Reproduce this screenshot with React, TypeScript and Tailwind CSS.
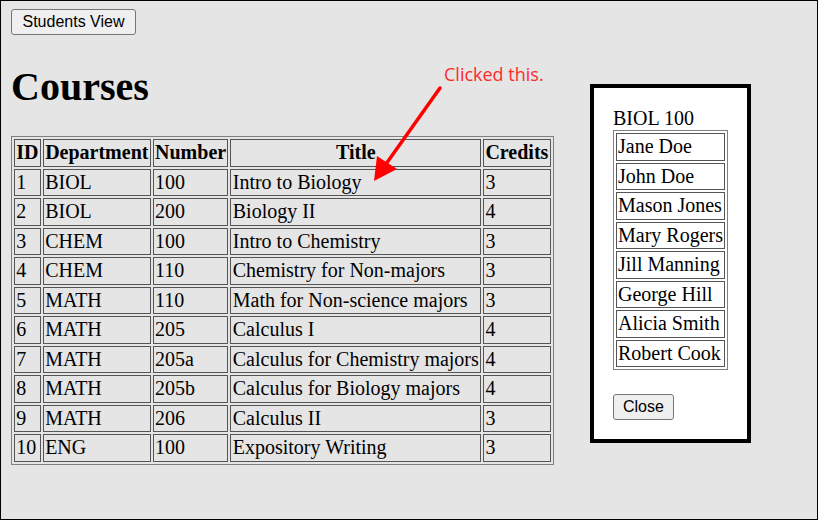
import React from 'react';

const courses = [
  { id: 1, dept: 'BIOL', num: '100', title: 'Intro to Biology', credits: 3 },
  { id: 2, dept: 'BIOL', num: '200', title: 'Biology II', credits: 4 },
  { id: 3, dept: 'CHEM', num: '100', title: 'Intro to Chemistry', credits: 3 },
  { id: 4, dept: 'CHEM', num: '110', title: 'Chemistry for Non-majors', credits: 3 },
  { id: 5, dept: 'MATH', num: '110', title: 'Math for Non-science majors', credits: 3 },
  { id: 6, dept: 'MATH', num: '205', title: 'Calculus I', credits: 4 },
  { id: 7, dept: 'MATH', num: '205a', title: 'Calculus for Chemistry majors', credits: 4 },
  { id: 8, dept: 'MATH', num: '205b', title: 'Calculus for Biology majors', credits: 4 },
  { id: 9, dept: 'MATH', num: '206', title: 'Calculus II', credits: 3 },
  { id: 10, dept: 'ENG', num: '100', title: 'Expository Writing', credits: 3 },
];

const students = [
  'Jane Doe',
  'John Doe',
  'Mason Jones',
  'Mary Rogers',
  'Jill Manning',
  'George Hill',
  'Alicia Smith',
  'Robert Cook',
];

// обычная кнопка в стиле браузера по умолчанию
const btn =
  "h-[26px] bg-[#efefef] border border-[#767676] rounded-[3px] text-[16px] leading-[18px] text-black font-['Liberation_Sans',Arial,sans-serif]";

const cell = 'border border-[#555] py-px px-[1.3px] leading-[23.5px] text-left align-middle';
const studentCell = 'border border-[#555] p-px leading-[23.5px] text-left align-middle';

export default function App() {
  return (
    <div className="relative w-[818px] h-[520px] overflow-hidden border border-black bg-[#e5e5e5] pt-[8px] pl-[10px] font-['Liberation_Serif','Times_New_Roman',serif] text-black">
      <button className={btn + ' px-[10.5px]'}>Students View</button>

      <h1 className="mt-[30px] text-[40px] leading-[44px] font-bold">Courses</h1>

      <table className="mt-[27px] border-separate border-spacing-[2px] border border-[#808080] text-[20px]">
        <thead>
          <tr>
            <th className={cell + ' font-bold !text-center'}>ID</th>
            <th className={cell + ' font-bold !text-center'}>Department</th>
            <th className={cell + ' font-bold !text-center'}>Number</th>
            <th className={cell + ' font-bold !text-center'}>Title</th>
            <th className={cell + ' font-bold !text-center'}>Credits</th>
          </tr>
        </thead>
        <tbody>
          {courses.map(c => (
            <tr key={c.id}>
              <td className={cell}>{c.id}</td>
              <td className={cell}>{c.dept}</td>
              <td className={cell}>{c.num}</td>
              <td className={cell}>{c.title}</td>
              <td className={cell}>{c.credits}</td>
            </tr>
          ))}
        </tbody>
      </table>

      {/* Диалог со списком студентов выбранного курса */}
      <div className="absolute left-[589px] top-[83px] border-[4px] border-black bg-white p-[19px]">
        <div className="text-[20px] leading-[23px]">BIOL 100</div>
        <table className="border-separate border-spacing-[2px] border border-[#808080] text-[20px]">
          <tbody>
            {students.map(s => (
              <tr key={s}>
                <td className={studentCell}>{s}</td>
              </tr>
            ))}
          </tbody>
        </table>
        <button className={btn + ' px-[9px] mt-[24px] block'}>Close</button>
      </div>

      {/* Пометка-стрелка поверх страницы */}
      <div className="absolute left-[443px] top-[61px] text-[18px] leading-[24px] text-[#ff2a2a] font-['Open_Sans','Noto_Sans',sans-serif]">
        Clicked this.
      </div>
      <svg className="absolute left-0 top-0 pointer-events-none" width="818" height="520" viewBox="1 1 818 520">
        <line x1="440" y1="88" x2="386" y2="164" stroke="#ff0000" strokeWidth="3.5" strokeLinecap="round" />
        <polygon points="374,181 377,156 397,169" fill="#ff0000" />
      </svg>
    </div>
  );
}
